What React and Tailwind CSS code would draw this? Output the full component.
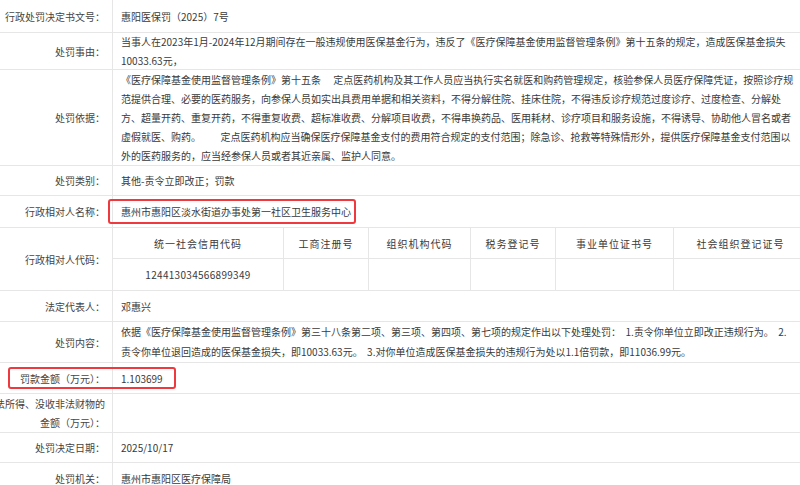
import React from 'react';

const Row = ({ label, h, children, plain }) => (
  <div className={`relative flex border-b border-[#e6e6e6] ${h}`}>
    <div className="w-[153px] shrink-0 border-r border-[#e6e6e6] flex items-center justify-end pr-[7px] text-right text-[#444]">
      <div>{label}</div>
    </div>
    {plain ? (
      children
    ) : (
      <div className="relative flex-1 flex items-center pl-[8px] text-[#3a3a3a]">
        <div>{children}</div>
      </div>
    )}
  </div>
);

const Lines = ({ lines, leading }) => (
  <div className={leading}>
    {lines.map((l, i) => (
      <div key={i} className="whitespace-pre">
        {l}
      </div>
    ))}
  </div>
);

const codeCols = [
  { title: '统一社会信用代码', value: '124413034566899349', w: 'w-[171px]' },
  { title: '工商注册号', value: '', w: 'w-[85px]' },
  { title: '组织机构代码', value: '', w: 'w-[102px]' },
  { title: '税务登记号', value: '', w: 'w-[85px]' },
  { title: '事业单位证书号', value: '', w: 'w-[118px]' },
  { title: '社会组织登记证号', value: '', w: 'w-[134px]' },
];

const basisLines = [
  '《医疗保障基金使用监督管理条例》第十五条\u3000 定点医药机构及其工作人员应当执行实名就医和购药管理规定，核验参保人员医疗保障凭证，按照诊疗规',
  '范提供合理、必要的医药服务，向参保人员如实出具费用单据和相关资料，不得分解住院、挂床住院，不得违反诊疗规范过度诊疗、过度检查、分解处',
  '方、超量开药、重复开药，不得重复收费、超标准收费、分解项目收费，不得串换药品、医用耗材、诊疗项目和服务设施，不得诱导、协助他人冒名或者',
  '虚假就医、购药。\u3000\u3000  定点医药机构应当确保医疗保障基金支付的费用符合规定的支付范围；除急诊、抢救等特殊情形外，提供医疗保障基金支付范围以',
  '外的医药服务的，应当经参保人员或者其近亲属、监护人同意。',
];

const contentLines = [
  '依据《医疗保障基金使用监督管理条例》第三十八条第二项、第三项、第四项、第七项的规定作出以下处理处罚：  1.责令你单位立即改正违规行为。  2.',
  '责令你单位退回造成的医保基金损失，即10033.63元。  3.对你单位造成医保基金损失的违规行为处以1.1倍罚款，即11036.99元。',
];

export default function App() {
  return (
    <div className="w-[800px] h-[485px] overflow-hidden bg-white">
      <div className="-ml-[40px] w-[850px] text-[10px] leading-[19px] font-['Noto_Sans_CJK_SC','Noto_Sans',sans-serif]">
        <Row label="行政处罚决定书文号：" h="h-[33px]">
          惠阳医保罚（2025）7号
        </Row>

        <Row label="处罚事由：" h="h-[37px]">
          <Lines
            leading="leading-[19px]"
            lines={[
              '当事人在2023年1月-2024年12月期间存在一般违规使用医保基金行为，违反了《医疗保障基金使用监督管理条例》第十五条的规定，造成医保基金损失',
              '10033.63元，',
            ]}
          />
        </Row>

        <Row label="处罚依据：" h="h-[96px]">
          <Lines leading="leading-[19px]" lines={basisLines} />
        </Row>

        <Row label="处罚类别：" h="h-[30px]">
          其他-责令立即改正；罚款
        </Row>

        <Row label="行政相对人名称：" h="h-[32px]">
          惠州市惠阳区淡水街道办事处第一社区卫生服务中心
          <div className="absolute -left-[5px] top-[3px] w-[248px] h-[25px] border-2 border-[#ee3a3f] rounded-[3px]" />
        </Row>

        <Row label="行政相对人代码：" h="h-[63px]" plain>
          <div className="flex-1 flex flex-col text-[#3a3a3a]">
            <div className="flex h-[31px] border-b border-[#e6e6e6]">
              {codeCols.map((c) => (
                <div
                  key={c.title}
                  className={`${c.w} shrink-0 border-r border-[#e6e6e6] flex items-center justify-center tracking-[1px]`}
                >
                  {c.title}
                </div>
              ))}
            </div>
            <div className="flex flex-1">
              {codeCols.map((c) => (
                <div
                  key={c.title}
                  className={`${c.w} shrink-0 border-r border-[#e6e6e6] flex items-center justify-center tracking-[0.3px]`}
                >
                  {c.value}
                </div>
              ))}
            </div>
          </div>
        </Row>

        <Row label="法定代表人：" h="h-[31px]">
          邓惠兴
        </Row>

        <Row label="处罚内容：" h="h-[41px]">
          <Lines leading="leading-[20px]" lines={contentLines} />
        </Row>

        <Row label="罚款金额（万元）：" h="h-[31px]">
          1.103699
          <div className="absolute left-[-105px] top-[4px] w-[168px] h-[22px] border-2 border-[#ee3a3f] rounded-[3px]" />
        </Row>

        <Row label="没收违法所得、没收非法财物的金额（万元）：" h="h-[39px]">
          {''}
        </Row>

        <Row label="处罚决定日期：" h="h-[30px]">
          2025/10/17
        </Row>

        <Row label="处罚机关：" h="h-[31px]">
          惠州市惠阳区医疗保障局
        </Row>
      </div>
    </div>
  );
}
